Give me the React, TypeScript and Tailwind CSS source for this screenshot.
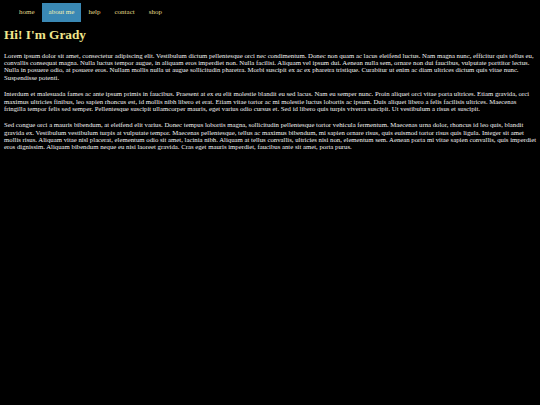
const navItems = ["home", "about me", "help", "contact", "shop"];

const paragraphs = [
  "Lorem ipsum dolor sit amet, consectetur adipiscing elit. Vestibulum dictum pellentesque orci nec condimentum. Donec non quam ac lacus eleifend luctus. Nam magna nunc, efficitur quis tellus eu, convallis consequat magna. Nulla luctus tempor augue, in aliquam eros imperdiet non. Nulla facilisi. Aliquam vel ipsum dui. Aenean nulla sem, ornare non dui faucibus, vulputate porttitor lectus. Nulla in posuere odio, at posuere eros. Nullam mollis nulla ut augue sollicitudin pharetra. Morbi suscipit ex ac ex pharetra tristique. Curabitur ut enim ac diam ultrices dictum quis vitae nunc. Suspendisse potenti.",
  "Interdum et malesuada fames ac ante ipsum primis in faucibus. Praesent at ex eu elit molestie blandit eu sed lacus. Nam eu semper nunc. Proin aliquet orci vitae porta ultrices. Etiam gravida, orci maximus ultricies finibus, leo sapien rhoncus est, id mollis nibh libero et erat. Etiam vitae tortor ac mi molestie luctus lobortis ac ipsum. Duis aliquet libero a felis facilisis ultrices. Maecenas fringilla tempor felis sed semper. Pellentesque suscipit ullamcorper mauris, eget varius odio cursus et. Sed id libero quis turpis viverra suscipit. Ut vestibulum a risus et suscipit.",
  "Sed congue orci a mauris bibendum, at eleifend elit varius. Donec tempus lobortis magna, sollicitudin pellentesque tortor vehicula fermentum. Maecenas urna dolor, rhoncus id leo quis, blandit gravida ex. Vestibulum vestibulum turpis at vulputate tempor. Maecenas pellentesque, tellus ac maximus bibendum, mi sapien ornare risus, quis euismod tortor risus quis ligula. Integer sit amet mollis risus. Aliquam vitae nisl placerat, elementum odio sit amet, lacinia nibh. Aliquam at tellus convallis, ultricies nisi non, elementum sem. Aenean porta mi vitae sapien convallis, quis imperdiet eros dignissim. Aliquam bibendum neque eu nisi laoreet gravida. Cras eget mauris imperdiet, faucibus ante sit amet, porta purus.",
];

export default function App() {
  return (
    <div className="min-h-[405px] w-full bg-black font-['Liberation_Serif',serif] text-white">
      <nav className="flex pl-3 pt-[3px]">
        {navItems.map((item) => (
          <a
            key={item}
            className={
              item === "about me"
                ? "flex h-[19px] items-center bg-[#3a88b4] px-[7px] text-[7px] text-[#f4efb0]"
                : "flex h-[19px] items-center px-[7px] text-[7px] text-[#e4dc8a]"
            }
          >
            {item}
          </a>
        ))}
      </nav>

      <main className="px-1">
        <h1 className="mt-[5px] text-[13.3px] font-bold leading-[16px] text-[#f0e68c]">
          Hi! I'm Grady
        </h1>

        {paragraphs.map((text, i) => (
          <p
            key={i}
            className={
              i === 0
                ? "mt-[9px] text-[6.75px] leading-[7.2px] text-[#f2f2f2]"
                : "mt-[9.5px] text-[6.75px] leading-[7.2px] text-[#f2f2f2]"
            }
          >
            {text}
          </p>
        ))}
      </main>
    </div>
  );
}
